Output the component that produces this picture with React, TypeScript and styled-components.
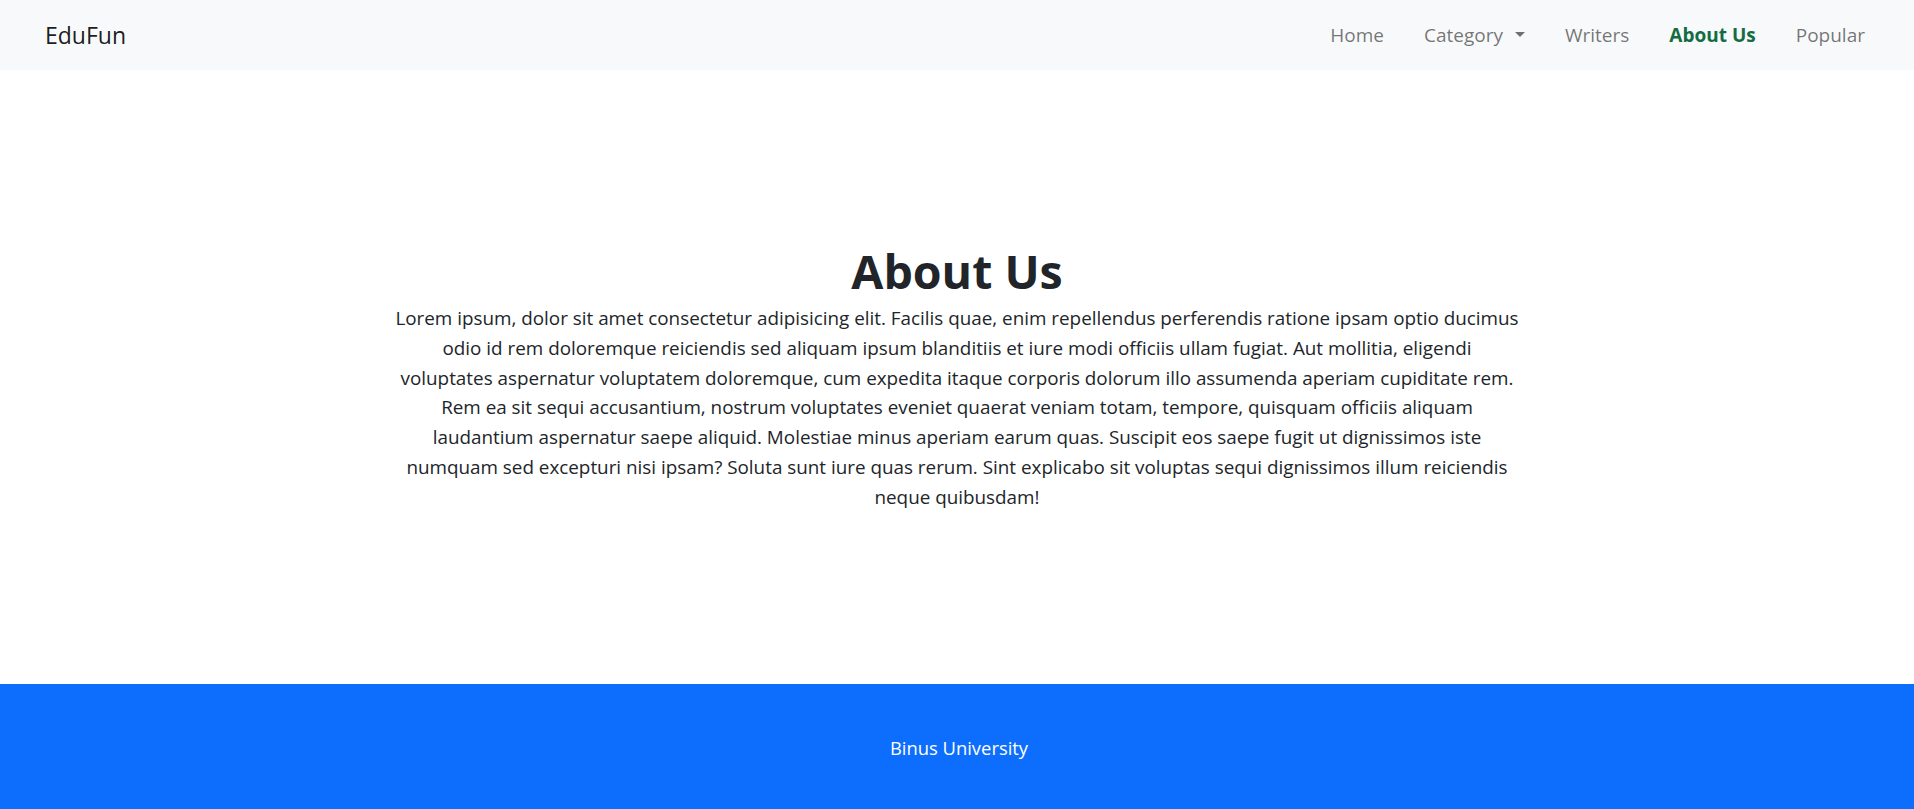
import React from "react";
import styled, { createGlobalStyle } from "styled-components";

const GlobalStyle = createGlobalStyle`
  *, *::before, *::after { box-sizing: border-box; }
  html, body { margin: 0; padding: 0; }
  body {
    font-family: "Open Sans", "Noto Sans", sans-serif;
    color: #212529;
    background: #ffffff;
  }
`;

const Page = styled.div`
  min-height: 100vh;
  display: flex;
  flex-direction: column;
`;

const Navbar = styled.nav`
  height: 70px;
  flex: 0 0 70px;
  background: #f8f9fa;
  display: flex;
  align-items: center;
  justify-content: space-between;
  padding: 0 29px 0 45px;
`;

const Brand = styled.a`
  font-size: 23px;
  line-height: 1.5;
  color: rgba(0, 0, 0, 0.9);
  text-decoration: none;
`;

const NavList = styled.ul`
  list-style: none;
  margin: 0;
  padding: 0;
  display: flex;
  align-items: center;
`;

const NavLink = styled.a<{ $active?: boolean }>`
  display: flex;
  align-items: center;
  padding: 0 20px;
  font-size: 19px;
  line-height: 1.5;
  text-decoration: none;
  font-weight: ${(p) => (p.$active ? 700 : 400)};
  color: ${(p) => (p.$active ? "#146c43" : "rgba(0, 0, 0, 0.55)")};
`;

const Caret = styled.span`
  display: inline-block;
  width: 0;
  height: 0;
  margin-left: 12px;
  margin-top: -1px;
  border-top: 5.5px solid rgba(0, 0, 0, 0.55);
  border-left: 5.5px solid transparent;
  border-right: 5.5px solid transparent;
`;

const Main = styled.main`
  flex: 1;
  display: flex;
  flex-direction: column;
  align-items: center;
  justify-content: center;
  text-align: center;
  padding-top: 3px;
`;

const Title = styled.h1`
  margin: 0 0 4px;
  font-size: 46.5px;
  font-weight: 700;
  line-height: 1.2;
  color: #212529;
`;

const Text = styled.p`
  margin: 0;
  font-size: 18.85px;
  line-height: 29.9px;
  color: #212529;
  white-space: nowrap;
`;

const Footer = styled.footer`
  height: 125px;
  flex: 0 0 125px;
  background: #0d6efd;
  color: #ffffff;
  display: flex;
  align-items: center;
  justify-content: center;
  padding: 3px 0 0 4px;
  font-size: 18.4px;
  line-height: 1.5;
`;

const lines = [
  "Lorem ipsum, dolor sit amet consectetur adipisicing elit. Facilis quae, enim repellendus perferendis ratione ipsam optio ducimus",
  "odio id rem doloremque reiciendis sed aliquam ipsum blanditiis et iure modi officiis ullam fugiat. Aut mollitia, eligendi",
  "voluptates aspernatur voluptatem doloremque, cum expedita itaque corporis dolorum illo assumenda aperiam cupiditate rem.",
  "Rem ea sit sequi accusantium, nostrum voluptates eveniet quaerat veniam totam, tempore, quisquam officiis aliquam",
  "laudantium aspernatur saepe aliquid. Molestiae minus aperiam earum quas. Suscipit eos saepe fugit ut dignissimos iste",
  "numquam sed excepturi nisi ipsam? Soluta sunt iure quas rerum. Sint explicabo sit voluptas sequi dignissimos illum reiciendis",
  "neque quibusdam!",
];

export default function App() {
  return (
    <Page>
      <GlobalStyle />
      <Navbar>
        <Brand href="#">EduFun</Brand>
        <NavList>
          <li><NavLink href="#">Home</NavLink></li>
          <li>
            <NavLink href="#">
              Category
              <Caret />
            </NavLink>
          </li>
          <li><NavLink href="#">Writers</NavLink></li>
          <li><NavLink href="#" $active>About Us</NavLink></li>
          <li><NavLink href="#">Popular</NavLink></li>
        </NavList>
      </Navbar>
      <Main>
        <Title>About Us</Title>
        <Text>
          {lines.map((l, i) => (
            <React.Fragment key={i}>
              {l}
              {i < lines.length - 1 && <br />}
            </React.Fragment>
          ))}
        </Text>
      </Main>
      <Footer>Binus University</Footer>
    </Page>
  );
}
